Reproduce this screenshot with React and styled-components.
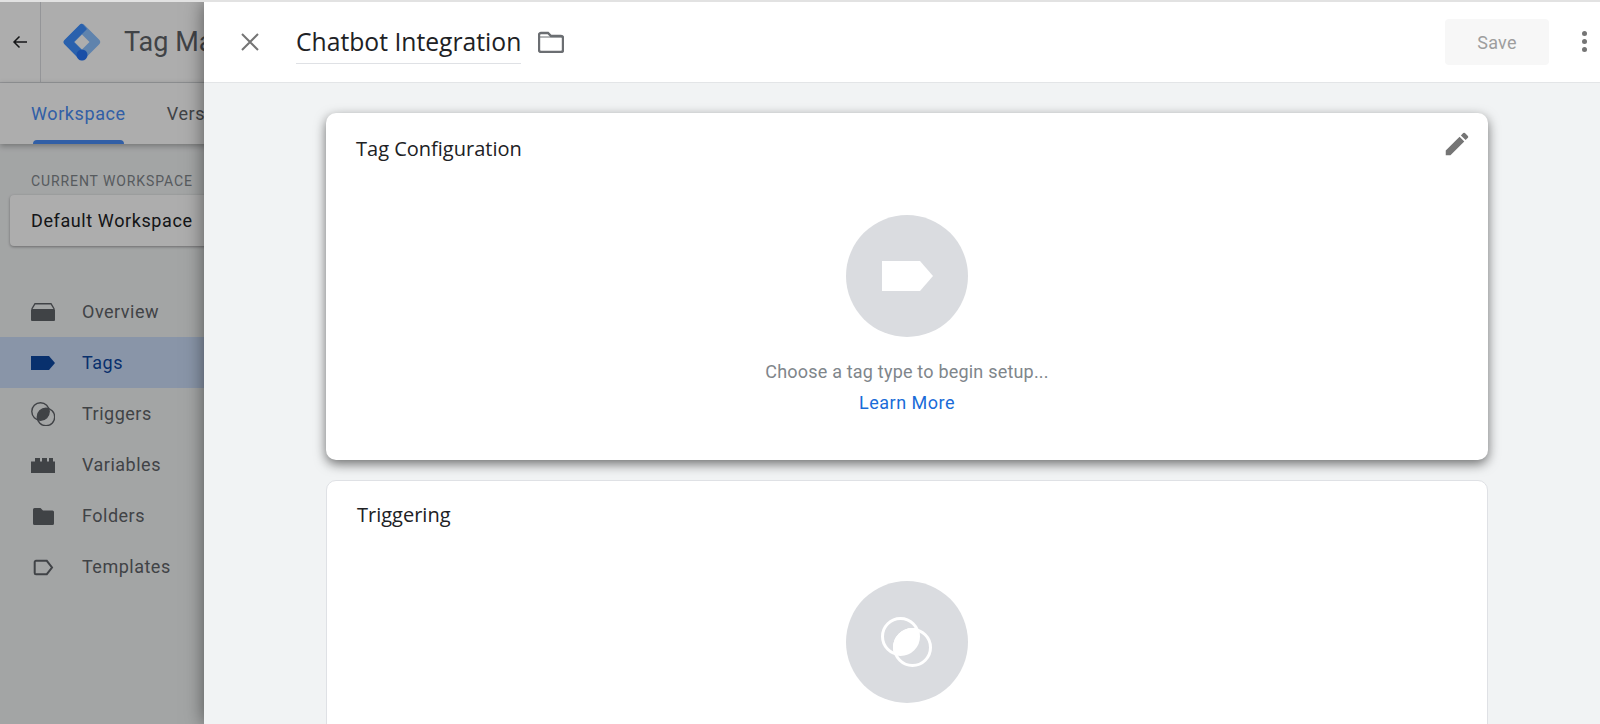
import styled, { createGlobalStyle } from "styled-components";

const GlobalStyle = createGlobalStyle`
  html, body, #root {
    height: 100%;
    margin: 0;
  }
  body {
    font-family: Roboto, "Liberation Sans", sans-serif;
    overflow: hidden;
  }
`;

const Page = styled.div`
  position: relative;
  height: 724px;
  box-sizing: border-box;
  border-top: 2px solid #e2e2e2;
  background: #f1f3f4;
  overflow: hidden;
`;

const Scrim = styled.div`
  position: absolute;
  inset: 0;
  background: rgba(0, 0, 0, 0.32);
`;

const TopBar = styled.div`
  height: 81px;
  display: flex;
  align-items: center;
  background: #fff;
  box-sizing: border-box;
  border-bottom: 1px solid #dadce0;
`;

const BackCell = styled.div`
  width: 41px;
  height: 100%;
  flex: none;
  display: flex;
  align-items: center;
  justify-content: center;
  box-sizing: border-box;
  border-right: 1px solid #dadce0;
`;

const Logo = styled.svg`
  width: 40px;
  height: 40px;
  margin-left: 21px;
  flex: none;
`;

const ProductName = styled.div`
  margin-left: 22px;
  font-size: 27px;
  color: #5f6368;
  white-space: nowrap;
`;

const TabBar = styled.div`
  height: 61px;
  display: flex;
  gap: 41px;
  padding-left: 31px;
  background: #fff;
  box-shadow: 0 2px 6px rgba(0, 0, 0, 0.3);
  position: relative;
`;

const Tab = styled.div`
  position: relative;
  height: 61px;
  line-height: 62px;
  font-size: 18px;
  letter-spacing: 0.6px;
  color: ${(p) => (p.$active ? "#4a8cf5" : "#5f6368")};

  &::after {
    content: "";
    display: ${(p) => (p.$active ? "block" : "none")};
    position: absolute;
    left: 2px;
    right: 2px;
    bottom: 0;
    height: 4px;
    border-radius: 4px 4px 0 0;
    background: #4a8cf5;
  }
`;

const Sidebar = styled.div`
  width: 204px;
`;

const WorkspaceLabel = styled.div`
  margin: 30px 0 0 31px;
  height: 15px;
  line-height: 15px;
  font-size: 14px;
  letter-spacing: 0.9px;
  color: #80868b;
  white-space: nowrap;
`;

const WorkspaceCard = styled.div`
  margin: 6px 0 0 10px;
  width: 240px;
  height: 51px;
  line-height: 52px;
  padding-left: 21px;
  box-sizing: border-box;
  border-radius: 4px;
  background: #fff;
  box-shadow: 0 1px 3px rgba(0, 0, 0, 0.35);
  font-size: 18px;
  letter-spacing: 0.6px;
  color: #202124;
  white-space: nowrap;
`;

const Nav = styled.div`
  margin-top: 40px;
  width: 204px;
`;

const NavRow = styled.div`
  height: 51px;
  display: flex;
  align-items: center;
  padding-left: 31px;
  gap: 27px;
  font-size: 18px;
  letter-spacing: 0.5px;
  color: ${(p) => (p.$active ? "#0d47a1" : "#5f6368")};
  background: ${(p) => (p.$active ? "#cbdcf8" : "transparent")};
`;

const NavIcon = styled.svg`
  width: 24px;
  height: 24px;
  flex: none;
  fill: currentColor;
  color: ${(p) => (p.$active ? "#0d47a1" : "#5f6368")};
`;

const Panel = styled.div`
  position: absolute;
  top: 0;
  left: 204px;
  right: 0;
  bottom: 0;
  display: flex;
  flex-direction: column;
  background: #f1f3f4;
  box-shadow: 0 0 18px rgba(0, 0, 0, 0.5);
`;

const PanelHeader = styled.div`
  height: 80px;
  flex: none;
  display: flex;
  align-items: center;
  background: #fff;
  border-bottom: 1px solid #e3e5e7;
  padding-left: 34px;
`;

const CloseIcon = styled.svg`
  width: 24px;
  height: 24px;
  flex: none;
  fill: none;
  stroke: #757575;
  stroke-width: 2;
`;

const TagName = styled.div`
  margin-left: 34px;
  margin-top: 2px;
  height: 42px;
  line-height: 40px;
  box-sizing: border-box;
  border-bottom: 1px solid #dfe1e5;
  font-family: "Open Sans", sans-serif;
  font-size: 24.7px;
  color: #202124;
  white-space: nowrap;
`;

const FolderIcon = styled.svg`
  width: 26px;
  height: 22px;
  margin-left: 17px;
  flex: none;
  fill: none;
  stroke: #6b6e72;
  stroke-width: 2.4;
`;

const SaveButton = styled.button`
  margin-left: auto;
  width: 104px;
  height: 46px;
  border: none;
  border-radius: 4px;
  background: #f7f7f7;
  color: #9e9e9e;
  font-family: Roboto, sans-serif;
  font-size: 18px;
  letter-spacing: 0.3px;
`;

const MoreButton = styled.div`
  width: 51px;
  box-sizing: border-box;
  padding-right: 13px;
  margin-top: -2px;
  flex: none;
  display: flex;
  flex-direction: column;
  align-items: flex-end;
  gap: 3px;

  span {
    width: 5px;
    height: 5px;
    border-radius: 50%;
    background: #757575;
  }
`;

const Body = styled.div`
  flex: 1;
  overflow: hidden;
  padding: 30px 112px 0 122px;
  display: flex;
  flex-direction: column;
  gap: 20px;
`;

const Card = styled.div`
  position: relative;
  flex: none;
  box-sizing: border-box;
  height: ${(p) => p.$height}px;
  padding: ${(p) => (p.$raised ? "21px 30px 0" : "19px 30px 0")};
  border-radius: 10px;
  background: #fff;
  border: ${(p) => (p.$raised ? "none" : "1px solid #dfe1e5")};
  box-shadow: ${(p) => (p.$raised ? "0 4px 12px rgba(0, 0, 0, 0.55)" : "none")};
  text-align: center;
`;

const CardTitle = styled.div`
  text-align: left;
  height: 30px;
  line-height: 30px;
  font-family: "Open Sans", sans-serif;
  font-size: 20px;
  color: #202124;
`;

const EditIcon = styled.svg`
  position: absolute;
  top: 16px;
  right: 16px;
  width: 30px;
  height: 30px;
  fill: #757575;
`;

const Circle = styled.div`
  width: 122px;
  height: 122px;
  margin: ${(p) => p.$top}px auto 0;
  border-radius: 50%;
  background: #dadce0;
  display: flex;
  align-items: center;
  justify-content: center;
`;

const Hint = styled.div`
  margin-top: 23px;
  line-height: 24px;
  font-size: 18px;
  letter-spacing: 0.2px;
  color: #80868b;
`;

const LearnMore = styled.a`
  display: block;
  margin-top: 7px;
  line-height: 24px;
  font-size: 18px;
  letter-spacing: 0.5px;
  color: #1a6cd8;
`;

const navItems = [
  {
    label: "Overview",
    icon: (
      <>
        <path d="M.8 9 4 3.700h16L23.200 9" fill="none" stroke="currentColor" strokeWidth="1.400" />
        <rect x="0" y="9" width="24" height="12" rx="1" />
      </>
    ),
  },
  { label: "Tags", active: true, icon: <path d="M0 5h18l6 7-6 7H0Z" /> },
  {
    label: "Triggers",
    icon: (
      <>
        <clipPath id="navTriggerClip">
          <circle cx="9.500" cy="9.500" r="8.700" />
        </clipPath>
        <circle cx="9.500" cy="9.500" r="8.700" fill="none" stroke="currentColor" strokeWidth="1.400" />
        <circle cx="15" cy="15" r="8.700" fill="none" stroke="currentColor" strokeWidth="1.400" />
        <circle cx="15" cy="15" r="8.700" clipPath="url(#navTriggerClip)" />
      </>
    ),
  },
  { label: "Variables", icon: <path d="M0 8.500H4V5h5v3.500h2V5h5v3.500h2V5h4v3.500h2V20H0Z" /> },
  {
    label: "Folders",
    icon: <path d="M3.500 4h6l2.500 2.500h9.500a1.500 1.500 0 0 1 1.500 1.500v11.500a1.500 1.500 0 0 1-1.500 1.500h-18A1.500 1.500 0 0 1 2 19.500v-14A1.500 1.500 0 0 1 3.500 4Z" />,
  },
  {
    label: "Templates",
    icon: (
      <path
        d="M5 5.800h10.800l5.200 6.700-5.200 6.700H5a1.300 1.300 0 0 1-1.300-1.300V7.100A1.300 1.300 0 0 1 5 5.800Z"
        fill="none"
        stroke="currentColor"
        strokeWidth="2"
      />
    ),
  },
];

const App = () => {
  return (
    <Page>
      <GlobalStyle />
      <TopBar>
        <BackCell>
          <svg width="16" height="16" viewBox="0 0 16 16" fill="none" stroke="#202124" strokeWidth="1.500">
            <path d="M15 8H2M7.500 2.500 2 8l5.500 5.500" />
          </svg>
        </BackCell>
        <Logo viewBox="0 0 40 40">
          <path d="M17.500 3a3.500 3.500 0 0 1 5 0L37 17.500a3.500 3.500 0 0 1 0 5L22.500 37a3.500 3.500 0 0 1-5 0L3 22.500a3.500 3.500 0 0 1 0-5L17.500 3Z" fill="#8cc1ff" />
          <path d="M18 2.500 2.500 18a3 3 0 0 0 0 4.200L18 38l6-6-12-12L25 7l-4-4.500a2 2 0 0 0-3 0Z" fill="#3e90ff" />
          <circle cx="20" cy="33" r="5.500" fill="#2674f7" />
          <path d="M20 12.500 27.500 20 20 27.500 12.500 20 20 12.500Z" fill="#fff" />
        </Logo>
        <ProductName>Tag Manager</ProductName>
      </TopBar>
      <TabBar>
        <Tab $active>Workspace</Tab>
        <Tab>Versions</Tab>
      </TabBar>
      <Sidebar>
        <WorkspaceLabel>CURRENT WORKSPACE</WorkspaceLabel>
        <WorkspaceCard>Default Workspace</WorkspaceCard>
        <Nav>
          {navItems.map((item) => (
            <NavRow key={item.label} $active={item.active}>
              <NavIcon viewBox="0 0 24 24" $active={item.active}>
                {item.icon}
              </NavIcon>
              {item.label}
            </NavRow>
          ))}
        </Nav>
      </Sidebar>
      <Scrim />
      <Panel>
        <PanelHeader>
          <CloseIcon viewBox="0 0 24 24">
            <path d="M4 4l16 16M20 4 4 20" />
          </CloseIcon>
          <TagName>Chatbot Integration</TagName>
          <FolderIcon viewBox="0 0 26 22">
            <path d="M3 2h7l3 3h10a2 2 0 0 1 2 2v12a2 2 0 0 1-2 2H3a2 2 0 0 1-2-2V4a2 2 0 0 1 2-2Z" />
            <path d="M1 6h24" strokeWidth="1" />
          </FolderIcon>
          <SaveButton disabled>Save</SaveButton>
          <MoreButton>
            <span />
            <span />
            <span />
          </MoreButton>
        </PanelHeader>
        <Body>
          <Card $raised $height={347}>
            <CardTitle>Tag Configuration</CardTitle>
            <EditIcon viewBox="0 0 24 24">
              <path d="M3 17.250V21h3.750L17.810 9.940l-3.750-3.750L3 17.250ZM20.710 7.040a1 1 0 0 0 0-1.410l-2.340-2.340a1 1 0 0 0-1.410 0l-1.830 1.830 3.750 3.750 1.830-1.830Z" />
            </EditIcon>
            <Circle $top={51}>
              <svg width="51" height="30" viewBox="0 0 51 30" fill="#fff">
                <path d="M0 0h38l13 15-13 15H0V0Z" />
              </svg>
            </Circle>
            <Hint>Choose a tag type to begin setup...</Hint>
            <LearnMore>Learn More</LearnMore>
          </Card>
          <Card $height={420}>
            <CardTitle>Triggering</CardTitle>
            <Circle $top={51}>
              <svg width="60" height="60" viewBox="-30 -30 60 60" fill="none" stroke="#fff" strokeWidth="3">
                <clipPath id="ringClip">
                  <circle cx="-6.500" cy="-5.500" r="18" />
                </clipPath>
                <circle cx="-6.500" cy="-5.500" r="18" />
                <circle cx="5.500" cy="5.500" r="18" />
                <circle cx="5.500" cy="5.500" r="18" fill="#fff" clipPath="url(#ringClip)" />
              </svg>
            </Circle>
          </Card>
        </Body>
      </Panel>
    </Page>
  );
};

export default App;
